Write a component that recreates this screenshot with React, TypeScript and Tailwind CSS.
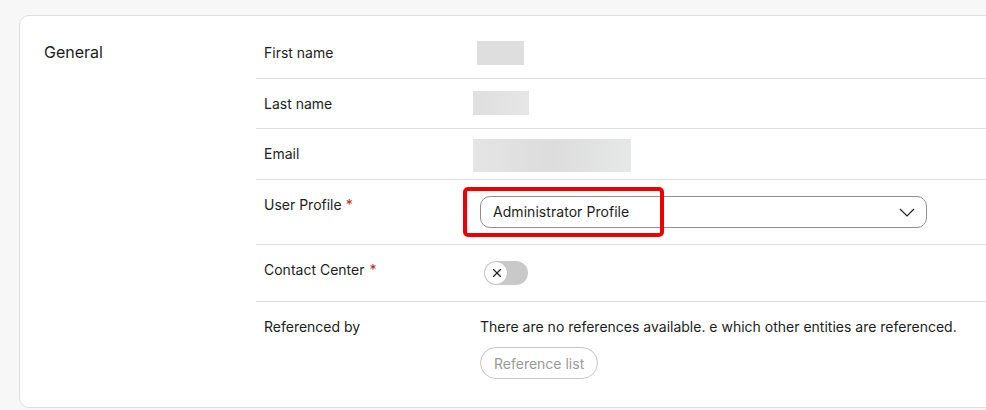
import React from 'react';
import { X } from 'lucide-react';

const rowLine = 'flex border-b border-[#dedede]';

const App: React.FC = () => {
  return (
    <div className="h-[410px] w-[986px] overflow-hidden bg-[#f7f7f7] pt-[15px] pl-[19px] font-['Inter',sans-serif] text-[14px] text-[#1d1d1d]">
      <div className="relative flex h-[393px] w-[1100px] rounded-l-[10px] border border-[#dedede] bg-white">
        <div className="w-[236px] shrink-0 pt-[25px] pl-[24px] text-[16px] leading-[22px]">General</div>

        <div className="w-[820px] pt-[12px]">
          {/* First name */}
          <div className={`${rowLine} h-[51px]`}>
            <div className="w-[208px] shrink-0 pt-[15px] pl-[8px] leading-[20px]">First name</div>
            <div className="mt-[13px] ml-[13px] h-[24px] w-[47px] bg-[#dedede]" />
          </div>

          {/* Last name */}
          <div className={`${rowLine} h-[50px]`}>
            <div className="w-[208px] shrink-0 pt-[15px] pl-[8px] leading-[20px]">Last name</div>
            <div className="mt-[12px] ml-[9px] h-[24px] w-[56px] bg-gradient-to-r from-[#dfdfdf] to-[#e6e6e6]" />
          </div>

          {/* Email */}
          <div className={`${rowLine} h-[51px]`}>
            <div className="w-[208px] shrink-0 pt-[15px] pl-[8px] leading-[20px]">Email</div>
            <div className="mt-[10px] ml-[9px] h-[33px] w-[158px] bg-gradient-to-r from-[#e5e5e5] via-[#dcdcdc] to-[#e6e8e7]" />
          </div>

          {/* User Profile */}
          <div className={`${rowLine} h-[65px]`}>
            <div className="w-[208px] shrink-0 pt-[15px] pl-[8px] leading-[20px]">
              User Profile <span className="text-[#a8341c]">*</span>
            </div>
            <div className="mt-[16px] ml-[16px] flex h-[32px] w-[447px] items-center justify-between rounded-[10px] border border-[#8f8f8f] pr-[11px] pl-[12px]">
              <span className="pb-[1px] tracking-[0.05px]">Administrator Profile</span>
              <svg width="16" height="10" viewBox="0 0 16 10" fill="none" stroke="#222" strokeWidth="1.2">
                <polyline points="1,2 8,9 15,2" />
              </svg>
            </div>
          </div>

          {/* Contact Center */}
          <div className={`${rowLine} h-[57px]`}>
            <div className="w-[208px] shrink-0 pt-[15px] pl-[8px] leading-[20px]">
              Contact Center <span className="ml-[1px] text-[#a8341c]">*</span>
            </div>
            <div className="mt-[16px] ml-[20px] flex h-[24px] w-[44px] items-center rounded-full bg-[#c9c9c9] p-[1px]">
              <span className="flex h-[22px] w-[22px] items-center justify-center rounded-full bg-white pl-[1px] shadow-[0_0_1px_rgba(0,0,0,0.2)]">
                <X size={14} strokeWidth={2} className="text-[#222]" />
              </span>
            </div>
          </div>

          {/* Referenced by */}
          <div className="flex">
            <div className="w-[208px] shrink-0 pt-[15px] pl-[8px] leading-[20px]">Referenced by</div>
            <div className="pt-[15px] pl-[16px]">
              <div className="leading-[20px] whitespace-nowrap">There are no references available. e which other entities are referenced.</div>
              <button className="mt-[10px] h-[32px] rounded-full border border-[#c6c6c6] px-[13px] text-[14px] text-[#9a9a9a]">
                Reference list
              </button>
            </div>
          </div>
        </div>

        {/* red highlight drawn over the screenshot */}
        <div className="absolute top-[171px] left-[443px] h-[50px] w-[201px] rounded-[5px] border-[4px] border-[#ee0000]" />
      </div>
    </div>
  );
};

export default App;
